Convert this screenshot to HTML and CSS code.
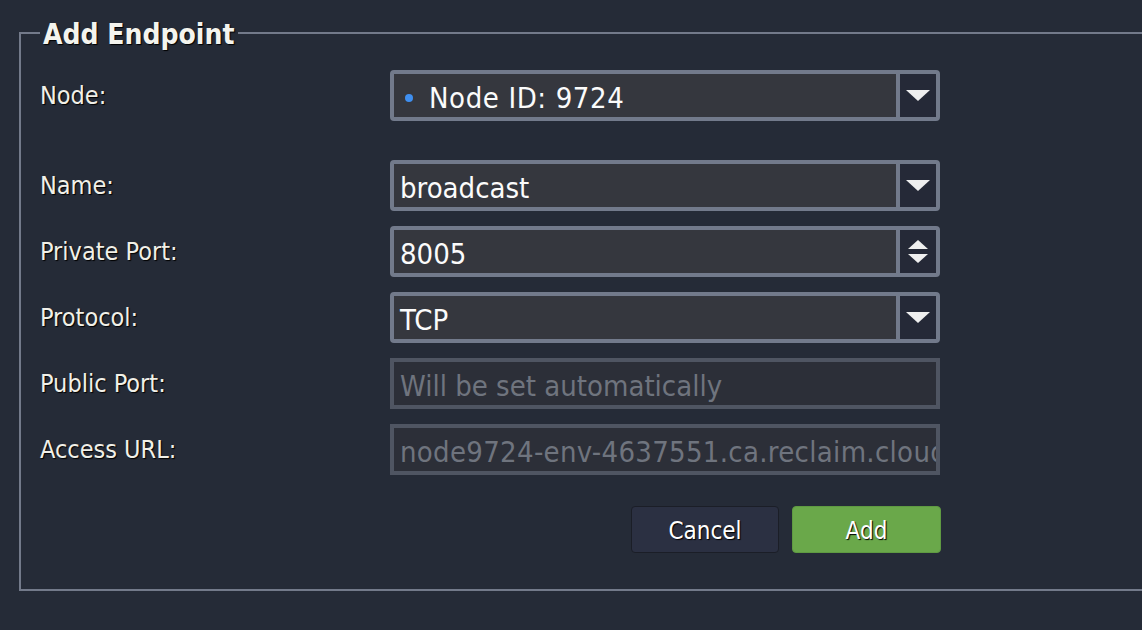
FILE: index.html
```html
<!DOCTYPE html>
<html>
<head>
<meta charset="utf-8">
<link rel="stylesheet" href="styles.css">
</head>
<body>
<fieldset class="panel">
  <legend class="panel-title">Add Endpoint</legend>
  <div class="form">
    <div class="row row-node">
      <label class="lbl">Node:</label>
      <div class="combo">
        <div class="combo-value"><span class="dot"></span>Node ID: 9724</div>
        <div class="combo-btn"><span class="tri-down"></span></div>
      </div>
    </div>
    <div class="row">
      <label class="lbl">Name:</label>
      <div class="combo">
        <div class="combo-value">broadcast</div>
        <div class="combo-btn"><span class="tri-down"></span></div>
      </div>
    </div>
    <div class="row">
      <label class="lbl">Private Port:</label>
      <div class="combo">
        <div class="combo-value">8005</div>
        <div class="combo-btn spin"><span class="tri-up-sm"></span><span class="tri-down-sm"></span></div>
      </div>
    </div>
    <div class="row">
      <label class="lbl">Protocol:</label>
      <div class="combo">
        <div class="combo-value">TCP</div>
        <div class="combo-btn"><span class="tri-down"></span></div>
      </div>
    </div>
    <div class="row">
      <label class="lbl">Public Port:</label>
      <div class="field-disabled">Will be set automatically</div>
    </div>
    <div class="row">
      <label class="lbl">Access URL:</label>
      <div class="field-disabled"><span class="url">node9724-env-4637551.ca.reclaim.cloud</span></div>
    </div>
  </div>
  <div class="actions">
    <button class="btn btn-cancel">Cancel</button>
    <button class="btn btn-add">Add</button>
  </div>
</fieldset>
</body>
</html>
```
FILE: styles.css
```css
html, body {
  margin: 0;
  padding: 0;
  background: #252b37;
  overflow: hidden;
  width: 1142px;
  height: 630px;
  font-family: "DejaVu Sans Condensed", "DejaVu Sans", sans-serif;
}

.panel {
  box-sizing: border-box;
  margin: 15px 0 0 19px;
  width: 1200px;
  border: 2px solid #737a8a;
  border-right: none;
  padding: 19px 0 36px 19px;
}

.panel-title {
  font-weight: bold;
  font-size: 28px;
  line-height: 32px;
  color: #f4f4ee;
  text-shadow: 1px 1px 1px #000;
  padding: 4px 4px 0 3px;
  margin-left: 0;
}

.form {
  display: flex;
  flex-direction: column;
  gap: 15px;
  width: 900px;
}

.row {
  display: grid;
  grid-template-columns: 350px 550px;
  align-items: center;
}

.row-node {
  margin-bottom: 24px;
}

.lbl {
  font-size: 25px;
  color: #f1f0e8;
  text-shadow: 1px 1px 1px #000;
}

.combo {
  box-sizing: border-box;
  height: 51px;
  display: flex;
  border: 4px solid #727a8b;
  border-radius: 4px;
  background: #35373e;
}

.combo-value {
  flex: 1;
  display: flex;
  align-items: center;
  padding: 4px 0 0 6px;
  font-size: 29px;
  color: #fbfbfb;
  white-space: nowrap;
}

.row-node .combo-value {
  padding-left: 11px;
  letter-spacing: 0.6px;
}

.dot {
  width: 8px;
  height: 8px;
  border-radius: 50%;
  background: #3f8ff0;
  margin: 0 16px 0 0;
}

.combo-btn {
  width: 36px;
  border-left: 4px solid #727a8b;
  background: #252937;
  display: flex;
  align-items: center;
  justify-content: center;
}

.spin {
  flex-direction: column;
  gap: 5px;
}

.tri-down {
  width: 0;
  height: 0;
  border-left: 12px solid transparent;
  border-right: 12px solid transparent;
  border-top: 11px solid #efefef;
}

.tri-up-sm {
  width: 0;
  height: 0;
  border-left: 10px solid transparent;
  border-right: 10px solid transparent;
  border-bottom: 9px solid #efefef;
}

.tri-down-sm {
  width: 0;
  height: 0;
  border-left: 10px solid transparent;
  border-right: 10px solid transparent;
  border-top: 9px solid #efefef;
}

.field-disabled {
  box-sizing: border-box;
  height: 51px;
  border: 4px solid #4f5562;
  background: #2c2f38;
  color: #6f747e;
  font-size: 29px;
  padding: 4px 0 0 6px;
  display: flex;
  align-items: center;
  white-space: nowrap;
  overflow: hidden;
}

.url {
  letter-spacing: 0.3px;
}

.actions {
  display: flex;
  justify-content: flex-end;
  gap: 13px;
  width: 901px;
  margin-top: 31px;
}

.btn {
  box-sizing: border-box;
  height: 47px;
  width: 149px;
  border-radius: 4px;
  font-family: "DejaVu Sans Condensed", "DejaVu Sans", sans-serif;
  font-size: 24px;
  color: #ffffff;
  text-shadow: 1px 1px 1px #000;
  cursor: pointer;
  padding: 3px 0 0 0;
}

.btn-cancel {
  width: 148px;
  background: #2b3042;
  border: 1px solid #1b1e27;
}

.btn-add {
  background: #6aa84a;
  border: 1px solid #5f9a42;
}
```
